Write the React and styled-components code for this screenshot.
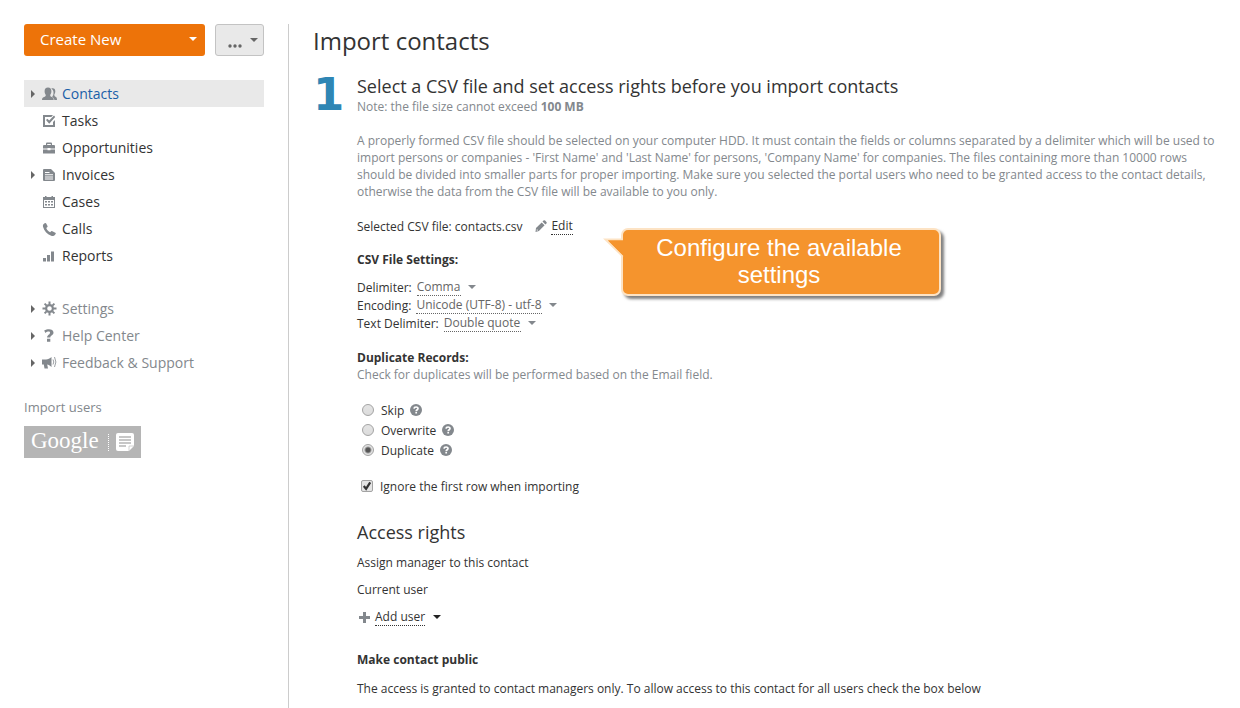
import styled, { createGlobalStyle } from "styled-components";

const GlobalStyle = createGlobalStyle`
  * {
    box-sizing: border-box;
  }

  body {
    margin: 0;
    background: #fff;
    color: #333;
    font: 12px/17px "Open Sans", sans-serif;
  }

  button, select, input {
    font: inherit;
    color: inherit;
    margin: 0;
  }

  h1, h2, h3, p, ul, fieldset {
    margin: 0;
    padding: 0;
    border: none;
    font-weight: 400;
  }
`;

const PAGE = styled.div`
  display: flex;
  align-items: stretch;
  min-height: 100vh;
  padding: 24px 24px 0;
`;

const SIDEBAR = styled.aside`
  flex: none;
  width: 240px;
`;

const Actions = styled.div`
  display: flex;
  gap: 10px;
  margin-bottom: 24px;
`;

const CreateButton = styled.button`
  flex: 1;
  display: flex;
  align-items: center;
  justify-content: space-between;
  height: 32px;
  padding: 0 8px 2px 16px;
  border: none;
  border-radius: 3px;
  background: #ed7309;
  color: #fff;
  font-size: 15px;
  cursor: pointer;
`;

const MoreButton = styled.button`
  display: flex;
  align-items: center;
  justify-content: space-between;
  width: 49px;
  height: 32px;
  padding: 0 5px 0 12px;
  border: 1px solid #c3c3c3;
  border-radius: 3px;
  background: #e9e9e9;
  color: #666;
  cursor: pointer;
`;

const Caret = styled.span`
  width: 0;
  height: 0;
  border: 4px solid transparent;
  border-bottom: none;
  border-top-color: ${(props) => props.$color || "#83888d"};
`;

const NavList = styled.ul`
  list-style: none;
  margin-bottom: ${(props) => (props.$muted ? "23px" : "26px")};
`;

const NavLink = styled.a`
  display: flex;
  align-items: center;
  height: 27px;
  padding-left: 7px;
  background: ${(props) => (props.$active ? "#e9e9e9" : "none")};
  color: ${(props) => (props.$active ? "#1a5fa8" : props.$muted ? "#83888d" : "#333")};
  font-size: 14px;
  text-decoration: none;

  svg {
    width: 15px;
    height: 15px;
    margin: 0 5px 0 7px;
    fill: #83888d;
  }
`;

const Expander = styled.span`
  border: 4px solid transparent;
  border-right: none;
  border-left-color: ${(props) => (props.$shown ? "#666" : "transparent")};
`;

const ImportTitle = styled.p`
  margin-bottom: 10px;
  color: #83888d;
  font-size: 13px;
`;

const GoogleButton = styled.button`
  display: flex;
  align-items: center;
  width: 117px;
  height: 32px;
  padding: 0 7px;
  border: none;
  background: #b5b5b5;
  color: #fff;
  cursor: pointer;

  span {
    flex: 1;
    padding-bottom: 2px;
    font: 23px/28px "Liberation Serif", serif;
    text-align: left;
  }

  svg {
    width: 18px;
    height: 18px;
  }
`;

const Dots = styled.i`
  height: 17px;
  margin-right: 7px;
  border-left: 1px dotted #fff;
`;

const MAIN = styled.main`
  flex: 1;
  min-width: 0;
  margin-left: 24px;
  padding-left: 24px;
  border-left: 1px solid #ccc;
`;

const Title = styled.h1`
  margin-bottom: 16px;
  font-size: 24px;
  line-height: 34px;
`;

const Step = styled.div`
  display: grid;
  grid-template-columns: 44px 1fr;
`;

const StepNumber = styled.div`
  color: #2f86b4;
  font: 700 45px/42px "DejaVu Sans", sans-serif;
`;

const Heading = styled.h2`
  font-size: 18px;
  line-height: 24px;
`;

const AccessHeading = styled(Heading)`
  margin: 24px 0 10px;
`;

const Note = styled.p`
  color: #83888d;
  margin-bottom: 17px;
`;

const FileRow = styled.div`
  position: relative;
  display: flex;
  align-items: center;
  margin-bottom: 16px;

  svg {
    width: 12px;
    height: 12px;
    margin: 0 4px 0 13px;
    fill: #83888d;
  }
`;

const EditLink = styled.a`
  height: 18px;
  border-bottom: 1px dotted #333;
  color: #333;
  text-decoration: none;
`;

const Callout = styled.div`
  position: absolute;
  top: 11px;
  left: 264px;
  width: 320px;
  padding: 4px 4px 6px 0;
  border: 2px solid #fde3c4;
  border-radius: 7px;
  background: #f5942d;
  box-shadow: 3px 3px 3px rgba(0, 0, 0, 0.5);
  color: #fff;
  font: 24px/27px "Liberation Sans", sans-serif;
  text-align: center;

  svg {
    position: absolute;
    top: 6px;
    left: -22px;
    width: 24px;
    height: 24px;
    margin: 0;
    fill: #f5942d;
  }
`;

const Subtitle = styled.h3`
  margin-bottom: ${(props) => props.$gap || 0}px;
  font-size: 12px;
  font-weight: 700;
`;

const Settings = styled.div`
  margin-bottom: 17px;
`;

const SettingRow = styled.div`
  display: flex;
  align-items: center;
  height: 18px;

  select {
    appearance: none;
    height: 18px;
    margin: 0 7px 0 5px;
    padding: 0;
    border: none;
    border-bottom: 1px dotted #666;
    border-radius: 0;
    background: none;
    color: #666;
    line-height: 17px;
  }
`;

const Choices = styled.fieldset`
  margin-bottom: 16px;
`;

const Choice = styled.div`
  display: flex;
  align-items: center;
  height: 20px;
  padding-left: 4px;

  label {
    margin: 0 6px 0 7px;
  }

  svg {
    width: 12px;
    height: 12px;
  }
`;

const Radio = styled.input`
  appearance: none;
  width: 12px;
  height: 12px;
  margin-left: 1px;
  border: 1px solid #a3a3a3;
  border-radius: 50%;
  background: linear-gradient(#e4e4e4, #dcdcdc);

  &:checked {
    background: radial-gradient(circle, #555 0 2px, #e2e2e2 4px);
  }
`;

const CheckBox = styled.div`
  position: relative;
  flex: none;
  display: flex;

  input {
    appearance: none;
    width: 12px;
    height: 12px;
    border: 1px solid #a3a3a3;
    border-radius: 2px;
    background: #e4e4e4;
  }

  svg {
    position: absolute;
    inset: 0;
    fill: none;
    stroke: #333;
    stroke-width: 2.4;
    pointer-events: none;
  }

  input:not(:checked) + svg {
    display: none;
  }
`;

const Line = styled.p`
  margin-bottom: 10px;
`;

const AddUser = styled.button`
  display: flex;
  align-items: center;
  height: 18px;
  margin-bottom: 25px;
  padding: 0 0 0 2px;
  border: none;
  background: none;
  cursor: pointer;

  svg {
    width: 11px;
    height: 11px;
    fill: #83888d;
  }

  span:nth-of-type(1) {
    height: 18px;
    margin: 0 8px 0 5px;
    border-bottom: 1px dotted #333;
  }
`;

const icons = {
  contacts: (
    <>
      <path d="M9.2 2.6c2.200-1.200 4.300.1 4.100 2.800-.1 1.600-.5 2.300-1 3 .1 1.500.4 1.900 1.300 2.400 1 .4 1.400 1.200 1.400 3.200h-2.600c-.4-1.800-1.200-2.400-2.300-2.900 .6-1.200 1.500-1.800 1.400-4.500 0-1.800-.8-3.200-2.300-4z" />
      <path d="M6 1.600c2.300 0 3.500 1.600 3.400 3.900-.1 1.700-.6 2.600-1.200 3.400.1 1.200.4 1.600 1.600 2.100 1.400.6 1.800 1.200 1.900 3H0c.1-1.800.6-2.400 2-3 1.300-.5 1.700-.9 1.800-2.100C3.200 8.100 2.700 7.200 2.600 5.500 2.500 3.200 3.700 1.600 6 1.600z" />
    </>
  ),
  tasks: (
    <path d="M1 2h10L9.300 4H3v8h8V9l2-2v7H1zM4 7l1.400-1.300L7.200 7.600 12 2.600 13.200 4 7.200 10.700z" />
  ),
  opportunities: (
    <path d="M5 2.500h4q1 0 1 1V5h2q1 0 1 1v2.500H8.500V8h-3v.5H1V6q0-1 1-1h2V3.500q0-1 1-1zM5.200 4v1h3.600V4zM1 9.500h4.500v.7h3v-.7H13V13.500H1z" />
  ),
  invoices: (
    <path
      fillRule="evenodd"
      d="M2 2h7l4 4v7q0 1-1 1H2q-1 0-1-1V3q0-1 1-1zm1 3v1h4.500V5zm0 2.300v1h8v-1zm0 2.200v1h8v-1zm0 2.100v1h8v-1z"
    />
  ),
  cases: (
    <path
      fillRule="evenodd"
      d="M1 3h2V2h1.500v1h5V2H11v1h2v11H1zm1 3v7h10V6zm1 1h2v1.500H3zm3 0h2v1.500H6zm3 0h2v1.500H9zM3 10h2v1.500H3zm3 0h2v1.500H6zm3 0h2v1.500H9z"
    />
  ),
  calls: (
    <path d="M1.400 3.200 3 2q.8-.3 1.200.5L5.500 5q.3.800-.4 1.300l-.8.600c.7 2 2 3.300 3.900 4.300l.9-.9q.6-.5 1.300-.1l2.900 1.600q.8.500.3 1.200l-1 1.300c-.6.800-2 .9-3.400.4C4.900 13 2.200 9.800 1.100 6 .8 4.900.8 3.900 1.400 3.200z" />
  ),
  reports: <path d="M1 10h3v3.500H1zM5 7h3v6.500H5zM9 3.500h3v10H9z" />,
  settings: (
    <>
      <path
        fillRule="evenodd"
        d="M7.500 3a4.500 4.500 0 1 1 0 9 4.500 4.500 0 0 1 0-9zm0 2.200a2.300 2.300 0 1 0 0 4.600 2.300 2.300 0 0 0 0-4.600z"
      />
      <path
        d="M7.500.5v3M7.500 11.500v3M.5 7.500h3M11.500 7.500h3M2.600 2.600l2 2M10.400 10.400l2 2M2.600 12.400l2-2M10.400 4.600l2-2"
        stroke="#83888d"
        strokeWidth="2"
      />
    </>
  ),
  help: (
    <path d="M2.200 2.600C5.800.2 11.500.7 11.500 4.600c0 2.900-3.200 3-3.200 5H5.100C5 6.900 8 6.500 8 4.700 8 3 5.300 3.400 3.400 4.900zM5 10.800h3.300v3H5z" />
  ),
  feedback: (
    <>
      <path d="M0 4.500h4c2 0 3.800-1 5.500-2.500v10C7.800 10.500 6.500 9.700 5.200 9.500L6 13.500H2.500L1.800 9.500H0z" />
      <path
        d="M11 4.500q1.600 2.500 0 5M12.500 2q2.800 5 0 10"
        fill="none"
        stroke="#83888d"
        strokeWidth=".8"
      />
    </>
  ),
};

const modules = [
  { name: "Contacts", icon: "contacts", expands: true, active: true },
  { name: "Tasks", icon: "tasks" },
  { name: "Opportunities", icon: "opportunities" },
  { name: "Invoices", icon: "invoices", expands: true },
  { name: "Cases", icon: "cases" },
  { name: "Calls", icon: "calls" },
  { name: "Reports", icon: "reports" },
];

const extras = [
  { name: "Settings", icon: "settings", expands: true },
  { name: "Help Center", icon: "help", expands: true },
  { name: "Feedback & Support", icon: "feedback", expands: true },
];

const fileSettings = [
  { id: "delimiter", label: "Delimiter:", options: ["Comma", "Colon"] },
  { id: "encoding", label: "Encoding:", options: ["Unicode (UTF-8) - utf-8"] },
  {
    id: "quote",
    label: "Text Delimiter:",
    options: ["Double quote", "Single quote"],
  },
];

const Nav = ({ items, muted }) => (
  <NavList $muted={muted}>
    {items.map((item) => (
      <li key={item.name}>
        <NavLink href="#" $active={item.active} $muted={muted}>
          <Expander $shown={item.expands} />
          <svg viewBox="0 0 15 15">{icons[item.icon]}</svg>
          {item.name}
        </NavLink>
      </li>
    ))}
  </NavList>
);

const HelpMark = () => (
  <svg viewBox="0 0 12 12">
    <circle cx="6" cy="6" r="6" fill="#83888d" />
    <path
      d="M4 4.600C4.200 2.500 8 2.500 8 4.500 8 5.800 6.200 5.700 6.200 7.200M6.200 8.100v1.500"
      fill="none"
      stroke="#fff"
      strokeWidth="1.700"
    />
  </svg>
);

const Sidebar = () => (
  <SIDEBAR>
    <Actions>
      <CreateButton>
        Create New
        <Caret $color="#fff" />
      </CreateButton>
      <MoreButton aria-label="More actions">
        <svg width="15" height="15" viewBox="0 0 15 15" fill="#666">
          <circle cx="2" cy="13" r="1.700" />
          <circle cx="7" cy="13" r="1.700" />
          <circle cx="12" cy="13" r="1.700" />
        </svg>
        <Caret $color="#666" />
      </MoreButton>
    </Actions>
    <Nav items={modules} />
    <Nav items={extras} muted />
    <ImportTitle>Import users</ImportTitle>
    <GoogleButton>
      <span>Google</span>
      <Dots />
      <svg viewBox="0 0 18 18">
        <path
          d="M2 0h14q2 0 2 2v11l-5 5H2q-2 0-2-2V2q0-2 2-2z"
          fill="#fff"
        />
        <path
          d="M3 4h12M3 7h12M3 10h12M3 13h7"
          stroke="#b5b5b5"
          strokeWidth="1.400"
        />
        <path d="M13 18v-5h5" fill="none" stroke="#b5b5b5" strokeWidth=".6" />
      </svg>
    </GoogleButton>
  </SIDEBAR>
);

const DuplicateChoice = ({ name, checked }) => (
  <Choice>
    <Radio type="radio" name="duplicates" id={name} defaultChecked={checked} />
    <label htmlFor={name}>{name}</label>
    <HelpMark />
  </Choice>
);

const App = () => {
  return (
    <>
      <GlobalStyle />
      <PAGE>
        <Sidebar />
        <MAIN>
          <Title>Import contacts</Title>
          <Step>
            <StepNumber>1</StepNumber>
            <div>
              <Heading>
                Select a CSV file and set access rights before you import
                contacts
              </Heading>
              <Note>
                Note: the file size cannot exceed <b>100 MB</b>
              </Note>
              <Note>
                A properly formed CSV file should be selected on your computer
                HDD. It must contain the fields or columns separated by a
                delimiter which will be used to import persons or companies -
                'First Name' and 'Last Name' for persons, 'Company Name' for
                companies. The files containing more than 10000 rows should be
                divided into smaller parts for proper importing. Make sure you
                selected the portal users who need to be granted access to the
                contact details, otherwise the data from the CSV file will be
                available to you only.
              </Note>

              <FileRow>
                Selected CSV file: contacts.csv
                <svg viewBox="0 0 12 12">
                  <path d="M8.500.6q.8-.8 1.600 0l1.300 1.300q.8.800 0 1.600l-1 1L7.500 1.600zM6.700 2.400l2.900 2.900-5.700 5.700L.5 12 1 8.100z" />
                  <path d="M1.800 9l1.300 1.300-1.300.5z" fill="#fff" />
                </svg>
                <EditLink href="#">Edit</EditLink>
                <Callout role="note">
                  <svg viewBox="0 0 24 24">
                    <path d="M24 3.500H5.500L24 22z" />
                    <path
                      d="M22 3.500H4.500L22 20.500"
                      fill="none"
                      stroke="#fde3c4"
                      strokeWidth="2"
                    />
                    <path d="M7 4.500h17v17z" />
                  </svg>
                  Configure the available
                  <br />
                  settings
                </Callout>
              </FileRow>

              <Subtitle $gap={10}>CSV File Settings:</Subtitle>
              <Settings>
                {fileSettings.map(({ id, label, options }) => (
                  <SettingRow key={id}>
                    <label htmlFor={id}>{label}</label>
                    <select id={id}>
                      {options.map((option) => (
                        <option key={option}>{option}</option>
                      ))}
                    </select>
                    <Caret />
                  </SettingRow>
                ))}
              </Settings>

              <Subtitle>Duplicate Records:</Subtitle>
              <Note>
                Check for duplicates will be performed based on the Email field.
              </Note>
              <Choices>
                <DuplicateChoice name="Skip" />
                <DuplicateChoice name="Overwrite" />
                <DuplicateChoice name="Duplicate" checked />
              </Choices>
              <Choice>
                <CheckBox>
                  <input type="checkbox" id="ignore" defaultChecked />
                  <svg viewBox="0 0 13 13">
                    <path d="M3 6.500l2.500 3 4.500-7" />
                  </svg>
                </CheckBox>
                <label htmlFor="ignore">
                  Ignore the first row when importing
                </label>
              </Choice>

              <AccessHeading>Access rights</AccessHeading>
              <Line>Assign manager to this contact</Line>
              <Line>Current user</Line>
              <AddUser>
                <svg viewBox="0 0 11 11">
                  <path d="M4 0h3v4h4v3H7v4H4V7H0V4h4z" />
                </svg>
                <span>Add user</span>
                <Caret $color="#222" />
              </AddUser>

              <Subtitle $gap={12}>Make contact public</Subtitle>
              <p>
                The access is granted to contact managers only. To allow access
                to this contact for all users check the box below
              </p>
            </div>
          </Step>
        </MAIN>
      </PAGE>
    </>
  );
};

export default App;
